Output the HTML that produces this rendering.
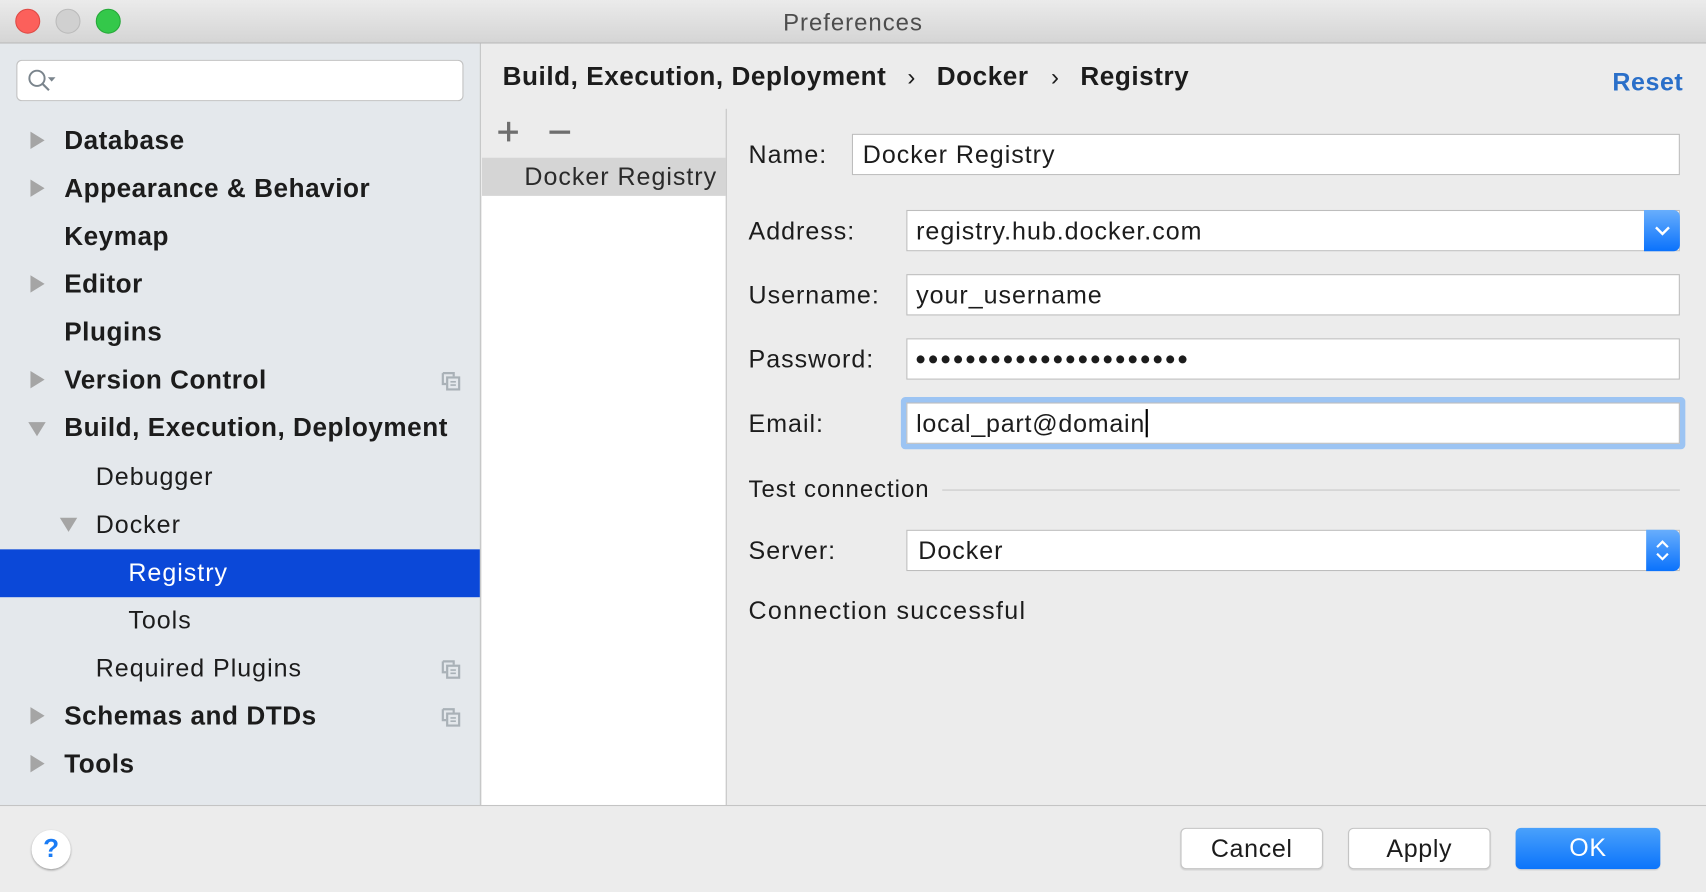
<!DOCTYPE html>
<html><head><meta charset="utf-8"><style>
html,body{margin:0;padding:0;width:1706px;height:892px;overflow:hidden;background:#ececec}
#w{position:absolute;left:0;top:0;width:1568px;height:820px;transform:scale(1.08801,1.0878);transform-origin:0 0;font-family:"Liberation Sans",sans-serif;color:#1c1c1c;background:#ececec}
.a{position:absolute}
.t{position:absolute;white-space:nowrap;font-size:23px;line-height:28px;letter-spacing:0.9px}
.b{font-weight:bold;letter-spacing:0.5px}
.f{position:absolute;background:#fff;border:1px solid #bdbdbd;box-sizing:border-box}
.arr{position:absolute;width:0;height:0;border-top:8px solid transparent;border-bottom:8px solid transparent;border-left:13px solid #a5a5a5}
.arrd{position:absolute;width:0;height:0;border-left:8px solid transparent;border-right:8px solid transparent;border-top:13px solid #a5a5a5}
.btn{position:absolute;top:761px;height:38px;width:131px;background:#fff;border:1px solid #c4c4c4;border-radius:5px;box-sizing:border-box;text-align:center;font-size:23px;line-height:36px;box-shadow:0 1px 1px rgba(0,0,0,.1);letter-spacing:0.6px}
.cur{display:inline-block;width:2px;height:26px;background:#000;vertical-align:-5px;margin-left:1px}
</style></head><body><div id="w">
<div class="a" style="left:0;top:0;width:1568px;height:40px;background:linear-gradient(#ebebeb,#d5d5d5);border-bottom:1px solid #b9b9b9;box-sizing:border-box"></div>
<div class="a" style="left:14px;top:8px;width:23px;height:23px;border-radius:50%;background:#fc605b;border:1px solid #de4a45;box-sizing:border-box"></div>
<div class="a" style="left:51px;top:8px;width:23px;height:23px;border-radius:50%;background:#d0d0d0;border:1px solid #bbb;box-sizing:border-box"></div>
<div class="a" style="left:88px;top:8px;width:23px;height:23px;border-radius:50%;background:#34c84a;border:1px solid #25a838;box-sizing:border-box"></div>
<div class="t" style="left:0;width:1568px;text-align:center;top:7px;color:#4d4d4d;font-size:22px;letter-spacing:0.9px">Preferences</div>

<div class="a" style="left:0;top:40px;width:441px;height:700px;background:#e4e8ec;border-right:1px solid #c4c4c4"></div>
<div class="a" style="left:15px;top:55px;width:411px;height:38px;background:#fff;border:1px solid #c2c2c2;border-radius:5px;box-sizing:border-box"></div>
<svg class="a" style="left:24px;top:62px" width="32" height="26"><circle cx="10" cy="10" r="7" fill="none" stroke="#7a848c" stroke-width="1.8"/><line x1="15" y1="15" x2="21" y2="21" stroke="#7a848c" stroke-width="2"/><path d="M20 9h7l-3.5 4z" fill="#7a848c"/></svg>

<div class="arr" style="left:28px;top:121px"></div><div class="t b" style="left:59px;top:116px;font-size:24px">Database</div>
<div class="arr" style="left:28px;top:165px"></div><div class="t b" style="left:59px;top:160px;font-size:24px">Appearance &amp; Behavior</div>
<div class="t b" style="left:59px;top:204px;font-size:24px">Keymap</div>
<div class="arr" style="left:28px;top:253px"></div><div class="t b" style="left:59px;top:248px;font-size:24px">Editor</div>
<div class="t b" style="left:59px;top:292px;font-size:24px">Plugins</div>
<div class="arr" style="left:28px;top:341px"></div><div class="t b" style="left:59px;top:336px;font-size:24px">Version Control</div>
<div class="arrd" style="left:26px;top:388px"></div><div class="t b" style="left:59px;top:380px;font-size:24px">Build, Execution, Deployment</div>
<div class="t" style="left:88px;top:424px">Debugger</div>
<div class="arrd" style="left:55px;top:476px"></div><div class="t" style="left:88px;top:468px">Docker</div>
<div class="a" style="left:0;top:505px;width:441px;height:44px;background:#0b48d8"></div>
<div class="t" style="left:118px;top:512px;color:#fff">Registry</div>
<div class="t" style="left:118px;top:556px">Tools</div>
<div class="t" style="left:88px;top:600px">Required Plugins</div>
<div class="arr" style="left:28px;top:650px"></div><div class="t b" style="left:59px;top:645px;font-size:24px">Schemas and DTDs</div>
<div class="arr" style="left:28px;top:694px"></div><div class="t b" style="left:59px;top:689px;font-size:24px">Tools</div>
<svg class="a" style="left:405px;top:341px" width="20" height="20"><path d="M2 2h10v3M2 2v10h3" fill="none" stroke="#a9b1b7" stroke-width="2"/><rect x="6" y="6" width="11" height="11" fill="none" stroke="#a9b1b7" stroke-width="2"/><path d="M9 10h5M9 13h5" stroke="#a9b1b7" stroke-width="1.5"/></svg>
<svg class="a" style="left:405px;top:606px" width="20" height="20"><path d="M2 2h10v3M2 2v10h3" fill="none" stroke="#a9b1b7" stroke-width="2"/><rect x="6" y="6" width="11" height="11" fill="none" stroke="#a9b1b7" stroke-width="2"/><path d="M9 10h5M9 13h5" stroke="#a9b1b7" stroke-width="1.5"/></svg>
<svg class="a" style="left:405px;top:650px" width="20" height="20"><path d="M2 2h10v3M2 2v10h3" fill="none" stroke="#a9b1b7" stroke-width="2"/><rect x="6" y="6" width="11" height="11" fill="none" stroke="#a9b1b7" stroke-width="2"/><path d="M9 10h5M9 13h5" stroke="#a9b1b7" stroke-width="1.5"/></svg>

<div class="t b" style="left:462px;top:57px;font-size:24px">Build, Execution, Deployment</div>
<div class="t" style="left:834px;top:57px;font-size:22px">›</div>
<div class="t b" style="left:861px;top:57px;font-size:24px">Docker</div>
<div class="t" style="left:966px;top:57px;font-size:22px">›</div>
<div class="t b" style="left:993px;top:57px;font-size:24px">Registry</div>
<div class="t b" style="left:1482px;top:61px;color:#2a6fc9;font-size:23px">Reset</div>

<div class="a" style="left:443px;top:180px;width:224px;height:560px;background:#fff"></div>
<div class="a" style="left:667px;top:100px;width:1px;height:640px;background:#c4c4c4"></div>
<div class="a" style="left:443px;top:145px;width:224px;height:35px;background:#d5d5d5"></div>
<div class="t" style="left:482px;top:148px;color:#2a2a2a">Docker Registry</div>
<div class="a" style="left:458px;top:120px;width:18px;height:3px;background:#6e6e6e"></div>
<div class="a" style="left:465.5px;top:112px;width:3px;height:18px;background:#6e6e6e"></div>
<div class="a" style="left:505px;top:120px;width:19px;height:3px;background:#6e6e6e"></div>

<div class="t" style="left:688px;top:128px">Name:</div>
<div class="f" style="left:783px;top:123px;width:761px;height:38px"></div>
<div class="t" style="left:793px;top:128px">Docker Registry</div>
<div class="t" style="left:688px;top:198px">Address:</div>
<div class="f" style="left:833px;top:193px;width:711px;height:38px"></div>
<div class="a" style="left:1511px;top:193px;width:33px;height:38px;background:linear-gradient(#68aefc,#0a72fc);border-radius:0 6px 6px 0"></div>
<svg class="a" style="left:1518px;top:204px" width="20" height="16"><path d="M4 5l6 6 6-6" fill="none" stroke="#fff" stroke-width="2.2"/></svg>
<div class="t" style="left:842px;top:198px">registry.hub.docker.com</div>
<div class="t" style="left:688px;top:257px">Username:</div>
<div class="f" style="left:833px;top:252px;width:711px;height:38px"></div>
<div class="t" style="left:842px;top:257px">your_username</div>
<div class="t" style="left:688px;top:316px">Password:</div>
<div class="f" style="left:833px;top:311px;width:711px;height:38px"></div>
<div class="t" style="left:841px;top:316px;font-size:17px;letter-spacing:1.2px">●●●●●●●●●●●●●●●●●●●●●●</div>
<div class="t" style="left:688px;top:375px">Email:</div>
<div class="a" style="left:828px;top:365px;width:721px;height:48px;border-radius:4px;background:#9cc4f3"></div>
<div class="f" style="left:833px;top:370px;width:711px;height:38px"></div>
<div class="t" style="left:842px;top:375px;letter-spacing:0.7px">local_part@domain<span class="cur"></span></div>
<div class="t" style="left:688px;top:436px;font-size:22px">Test connection</div>
<div class="a" style="left:866px;top:450px;width:678px;height:1px;background:#c8c8c8"></div>
<div class="t" style="left:688px;top:492px">Server:</div>
<div class="f" style="left:833px;top:487px;width:711px;height:38px"></div>
<div class="a" style="left:1513px;top:487px;width:31px;height:38px;background:linear-gradient(#68aefc,#0a72fc);border-radius:0 6px 6px 0"></div>
<svg class="a" style="left:1518px;top:492px" width="20" height="28"><path d="M5 11l5-5 5 5M5 17l5 5 5-5" fill="none" stroke="#fff" stroke-width="2"/></svg>
<div class="t" style="left:844px;top:492px">Docker</div>
<div class="t" style="left:688px;top:547px;letter-spacing:1.2px">Connection successful</div>

<div class="a" style="left:0;top:740px;width:1568px;height:1px;background:#c4c4c4"></div>
<div class="a" style="left:29px;top:763px;width:36px;height:36px;border-radius:50%;background:#fff;box-shadow:0 1px 2px rgba(0,0,0,.35)"></div>
<div class="t b" style="left:29px;top:767px;width:36px;text-align:center;color:#1a7cf5;font-size:24px;letter-spacing:0">?</div>
<div class="btn" style="left:1085px">Cancel</div>
<div class="btn" style="left:1239px">Apply</div>
<div class="btn" style="left:1393px;width:133px;color:#fff;border:none;background:linear-gradient(#4aa1fb,#0b74fb)">OK</div>
</div></body></html>
